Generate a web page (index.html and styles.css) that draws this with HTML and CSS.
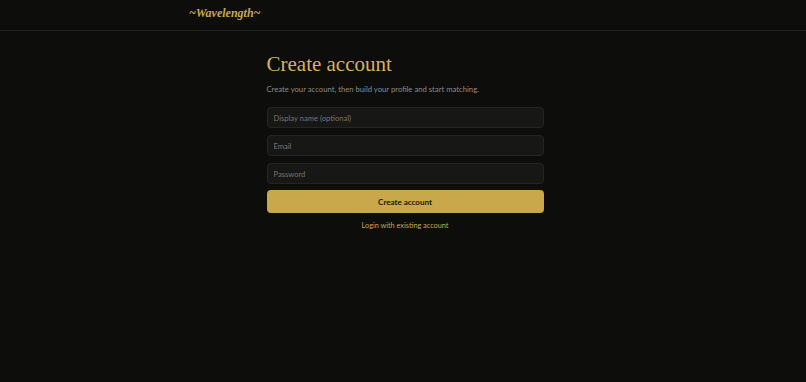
FILE: index.html
```html
<!DOCTYPE html>
<html lang="en">
<head>
  <meta charset="UTF-8">
  <title>Wavelength - Create account</title>
  <link rel="stylesheet" href="styles.css">
</head>

<body>
  <header class="topbar">
    <div class="topbar-inner">
      <a href="#" class="logo">~Wavelength~</a>
    </div>
  </header>

  <main class="auth">
    <h1 class="auth-title">Create account</h1>
    <p class="auth-sub">Create your account, then build your profile and start matching.</p>

    <form class="auth-form">
      <input class="field" type="text" placeholder="Display name (optional)">
      <input class="field" type="email" placeholder="Email">
      <input class="field" type="password" placeholder="Password">
      <button class="btn-primary" type="button">Create account</button>
    </form>

    <a href="#" class="auth-link">Login with existing account</a>
  </main>
</body>
</html>
```

FILE: styles.css
```css
/* ===============================
   BASE
=============================== */
html, body {
  margin: 0;
  padding: 0;
  height: 100%;
  background: #0d0d0c;
}
body {
  font-family: 'Lato', 'Open Sans', sans-serif;
  color: #d8d4cc;
}

/* Barra in alto */
.topbar {
  height: 31px;
  border-bottom: 1px solid #232322;
  box-sizing: border-box;
}
.topbar-inner {
  max-width: 428px;
  margin: 0 auto;
  height: 100%;
  display: flex;
  align-items: center;
}
.logo {
  font-family: 'Liberation Serif', serif;
  font-style: italic;
  font-weight: bold;
  font-size: 12px;
  color: #c9a54c;
  text-decoration: none;
  margin-top: -4px;
}

/* ===============================
   FORM
=============================== */
.auth {
  width: 281px;
  box-sizing: border-box;
  padding: 23px 0 0 4px;
  margin: 0 auto;
  display: flex;
  flex-direction: column;
}
.auth-title {
  font-family: 'Liberation Serif', serif;
  font-weight: normal;
  font-size: 21px;
  line-height: 1;
  color: #d6b35c;
  margin: 0;
}
.auth-sub {
  font-size: 7.7px;
  color: #8e8b85;
  margin: 9px 0 0;
}
.auth-form {
  display: flex;
  flex-direction: column;
  gap: 7px;
  margin-top: 13px;
}
.field {
  height: 21px;
  box-sizing: border-box;
  background: #171716;
  border: 1px solid #242423;
  border-radius: 4px;
  padding: 0 6px;
  font-family: inherit;
  font-size: 7.6px;
  color: #ddd;
  outline: none;
}
.field::placeholder {
  color: #77746f;
}
.btn-primary {
  height: 23px;
  margin-top: -1px;
  border: none;
  border-radius: 4px;
  background: #c9a84c;
  color: #1a1506;
  font-family: inherit;
  font-weight: bold;
  font-size: 8px;
  cursor: pointer;
}
.auth-link {
  align-self: center;
  margin-top: 8px;
  font-size: 7.3px;
  color: #c9a54c;
  text-decoration: none;
}
```
